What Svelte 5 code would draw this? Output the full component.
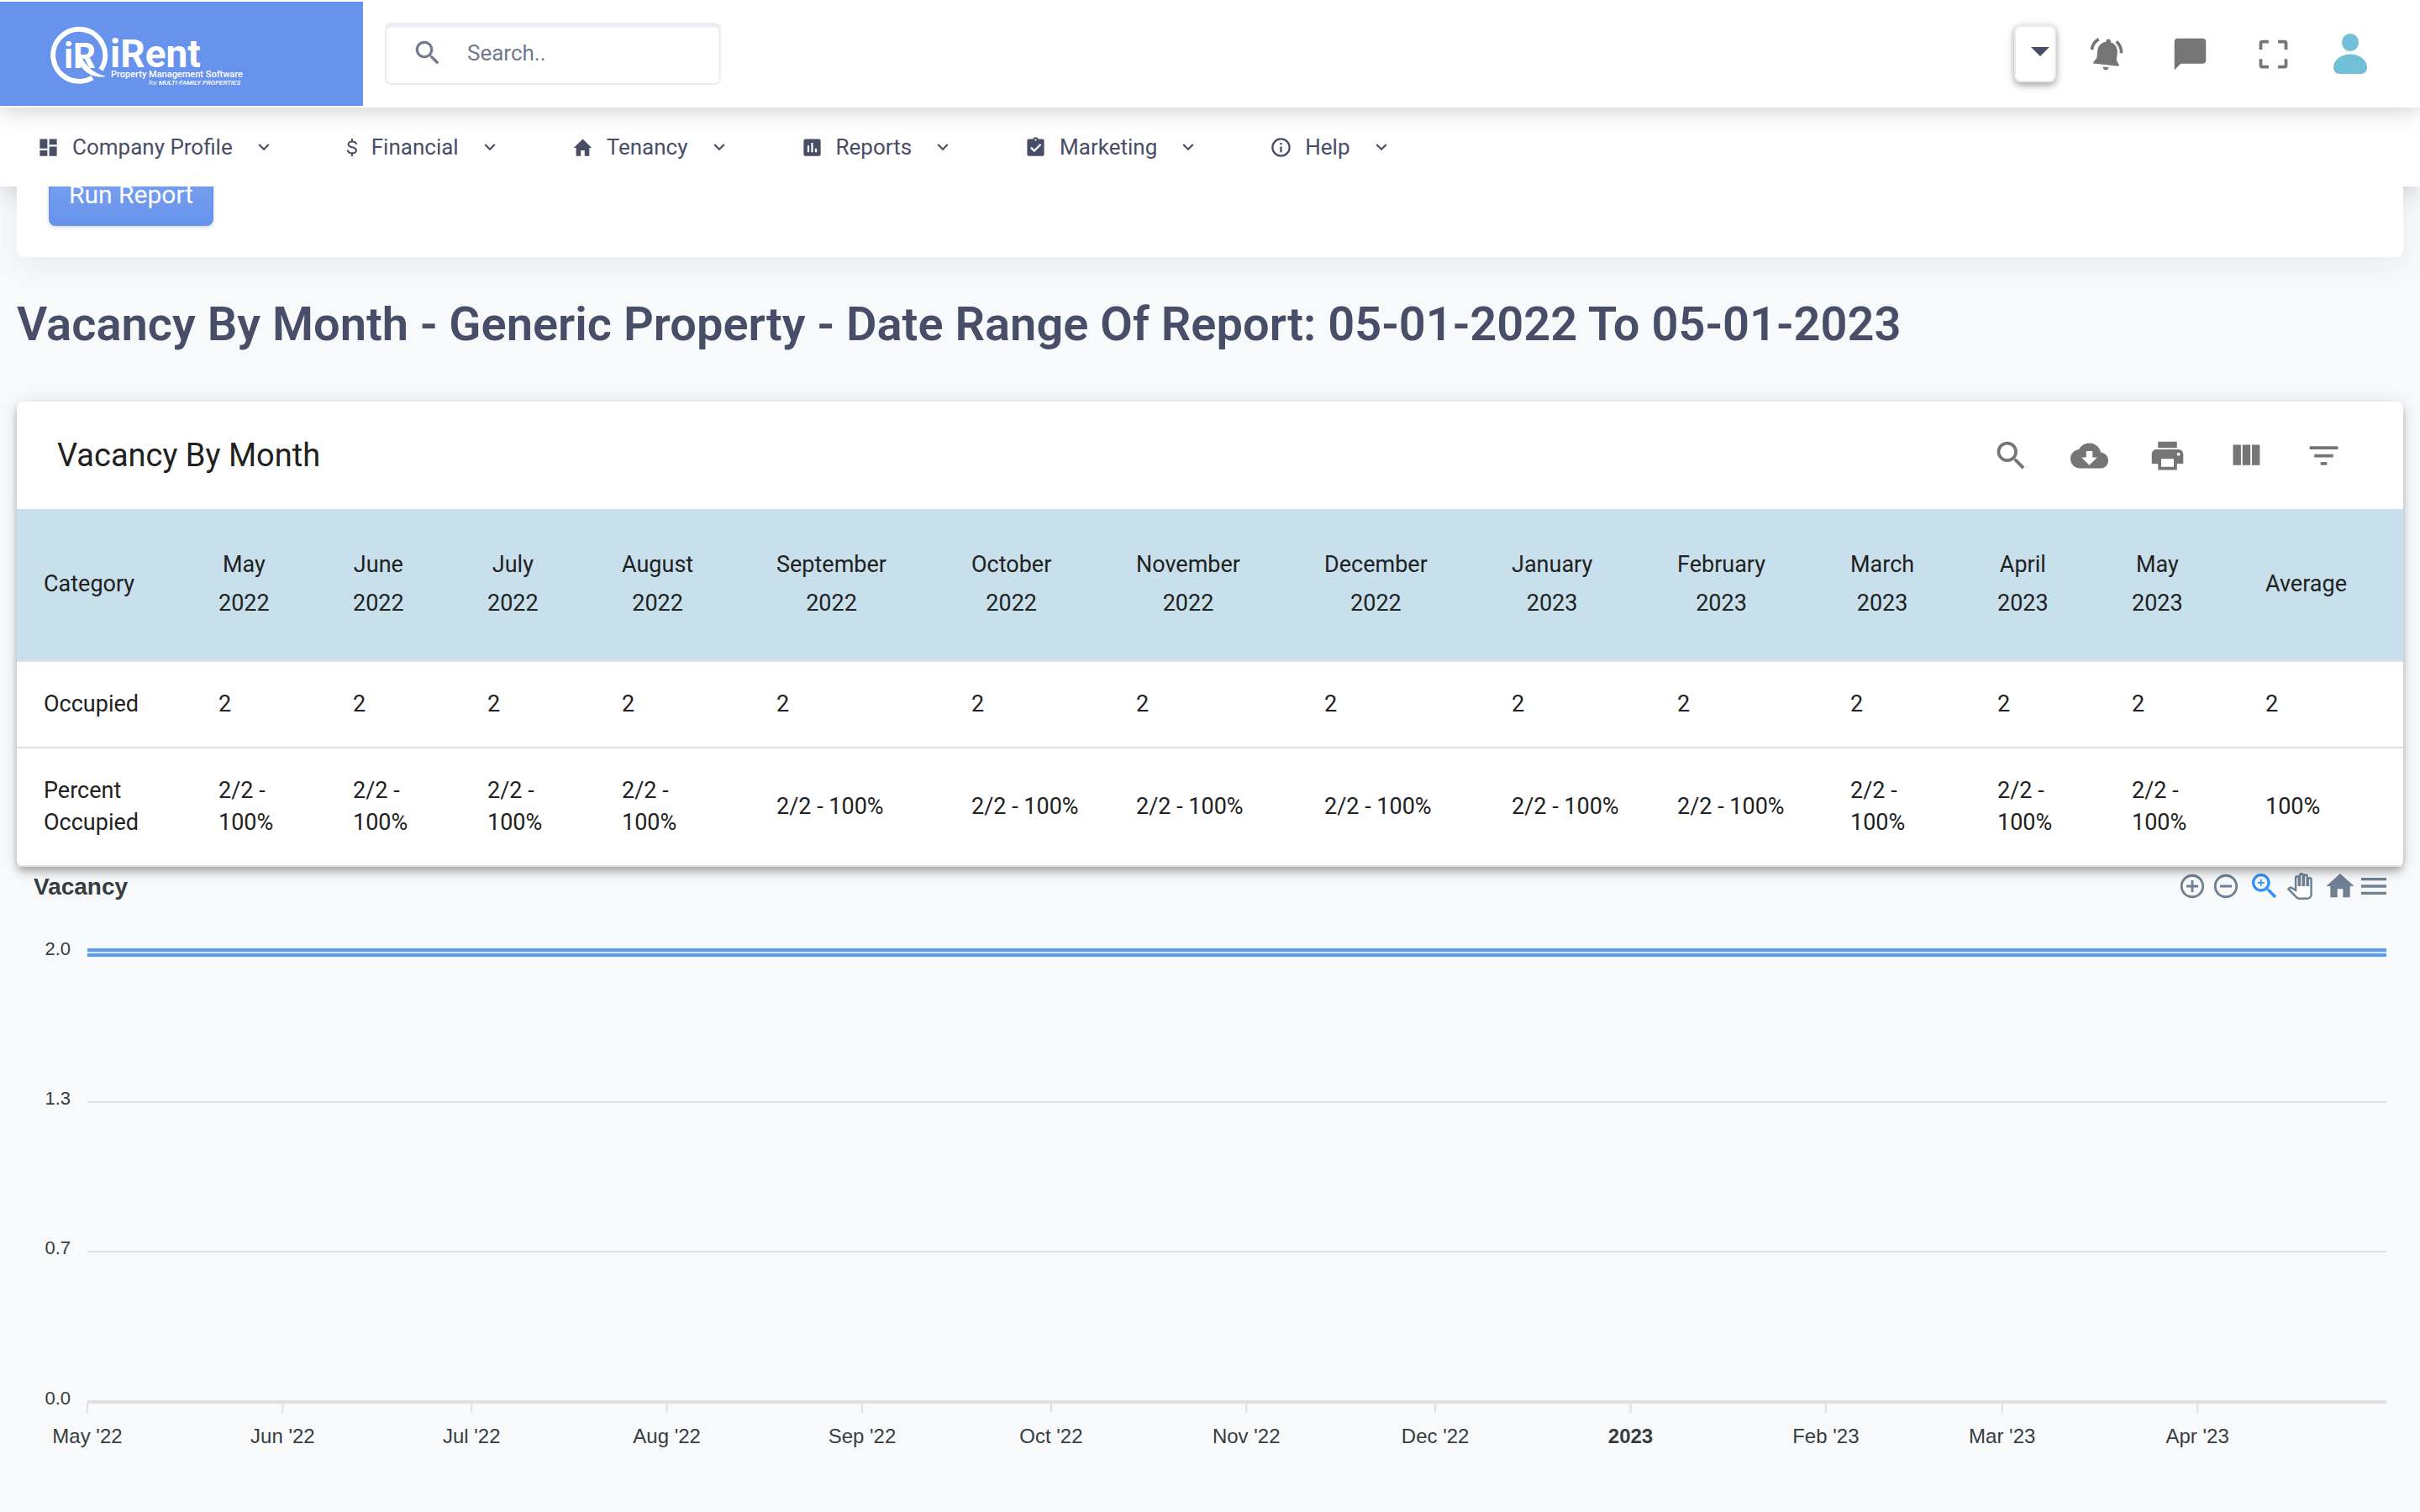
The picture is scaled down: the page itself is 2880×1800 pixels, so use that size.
<script>
  const menu = [
    { label: 'Company Profile', icon: 'dashboard' },
    { label: 'Financial', icon: 'dollar' },
    { label: 'Tenancy', icon: 'home' },
    { label: 'Reports', icon: 'report' },
    { label: 'Marketing', icon: 'task' },
    { label: 'Help', icon: 'info' }
  ];

  const columns = [
    { name: ['Category'], width: 208 },
    { name: ['May', '2022'], width: 160 },
    { name: ['June', '2022'], width: 160 },
    { name: ['July', '2022'], width: 160 },
    { name: ['August', '2022'], width: 184 },
    { name: ['September', '2022'], width: 232 },
    { name: ['October', '2022'], width: 196 },
    { name: ['November', '2022'], width: 224 },
    { name: ['December', '2022'], width: 223 },
    { name: ['January', '2023'], width: 197 },
    { name: ['February', '2023'], width: 206 },
    { name: ['March', '2023'], width: 175 },
    { name: ['April', '2023'], width: 160 },
    { name: ['May', '2023'], width: 159 },
    { name: ['Average'], width: 196 }
  ];
  const totalWidth = columns.reduce((sum, c) => sum + c.width, 0);

  const rows = [
    ['Occupied', ...Array(14).fill('2')],
    ['Percent Occupied', ...Array(13).fill('2/2 - 100%'), '100%']
  ];

  const tools = [
    { label: 'Search', d: 'M15.5 14h-.79l-.28-.27C15.41 12.59 16 11.11 16 9.5 16 5.91 13.09 3 9.5 3S3 5.91 3 9.5 5.91 16 9.5 16c1.61 0 3.09-.59 4.23-1.57l.27.28v.79l5 4.99L20.49 19l-4.99-5zm-6 0C7.01 14 5 11.99 5 9.5S7.01 5 9.5 5 14 7.01 14 9.5 11.99 14 9.5 14z' },
    { label: 'Download CSV', d: 'M19.35 10.04C18.67 6.59 15.64 4 12 4 9.11 4 6.6 5.64 5.35 8.04 2.34 8.36 0 10.91 0 14c0 3.31 2.69 6 6 6h13c2.76 0 5-2.24 5-5 0-2.64-2.05-4.78-4.65-4.96zM17 13l-5 5-5-5h3V9h4v4h3z' },
    { label: 'Print', d: 'M19 8H5c-1.66 0-3 1.34-3 3v6h4v4h12v-4h4v-6c0-1.66-1.34-3-3-3zm-3 11H8v-5h8v5zm3-7c-.55 0-1-.45-1-1s.45-1 1-1 1 .45 1 1-.45 1-1 1zm-1-9H6v4h12V3z' },
    { label: 'View Columns', d: 'M10 18h5V5h-5v13zm-6 0h5V5H4v13zM16 5v13h5V5h-5z' },
    { label: 'Filter Table', d: 'M10 18h4v-2h-4v2zM3 6v2h18V6H3zm3 7h12v-2H6v2z' }
  ];

  const yTicks = [
    { label: '2.0', y: 30 },
    { label: '1.3', y: 208 },
    { label: '0.7', y: 386 },
    { label: '0.0', y: 565 }
  ];

  const months = [
    ["May '22", 31], ["Jun '22", 30], ["Jul '22", 31], ["Aug '22", 31],
    ["Sep '22", 30], ["Oct '22", 31], ["Nov '22", 30], ["Dec '22", 31],
    ['2023', 31], ["Feb '23", 28], ["Mar '23", 31], ["Apr '23", 30]
  ];
  let day = 0;
  const xTicks = months.map(([label, days]) => {
    const x = (day / 365) * 100;
    day += days;
    return { label, x };
  });
</script>

<header class="topbar">
  <a class="brand" href="#home" aria-label="iRent home">
    <svg class="logo" viewBox="0 0 232 80" aria-hidden="true">
      <path d="M60 59A31 31 0 1 0 50 68.500" fill="none" stroke="#fff" stroke-width="6" />
      <text class="mono" x="16" y="57">iR</text>
      <path d="M36 42C42 55 51 63 66 67C49 70 36 60 31 44Z" fill="#fff" />
      <text class="name" x="71" y="56">iRent</text>
      <text class="tag" x="72" y="68">Property Management Software</text>
      <text class="sub" x="117" y="77">for <tspan class="strong">MULTI-FAMILY PROPERTIES</tspan></text>
    </svg>
  </a>

  <label class="search">
    <svg viewBox="0 0 24 24" aria-hidden="true"><path d={tools[0].d} /></svg>
    <input type="text" placeholder="Search.." aria-label="Search" />
  </label>

  <div class="actions">
    <button class="picker" type="button" aria-label="Select property">
      <svg viewBox="0 0 22 11" aria-hidden="true"><path d="M0 0H22L11 11Z" /></svg>
    </button>
    <button class="act" type="button" aria-label="Notifications">
      <svg viewBox="0 0 24 24" aria-hidden="true">
        <g transform="rotate(6 12 12)">
          <path d="M12 2.300c-.900 0-1.500.700-1.500 1.500v.400C7.600 4.900 5.800 7.300 5.800 10.200v5L3.900 18v.800h16.400V18l-1.900-2.800v-5c0-2.900-1.900-5.300-4.900-6v-.400c0-.800-.600-1.500-1.500-1.500z" />
          <path d="M10.300 20.200h3.600a1.800 1.800 0 0 1-3.600 0z" />
        </g>
        <path d="M2.400 9.200C2.700 6.300 4.200 3.900 6.800 2.500M18 3.900C20 5.700 21.200 8.300 21.100 11.300" fill="none" stroke="#757575" stroke-width="1.900" />
      </svg>
    </button>
    <button class="act" type="button" aria-label="Messages">
      <svg viewBox="0 0 24 24" aria-hidden="true"><path d="M20 2H4c-1.100 0-2 .900-2 2v18l4-4h14c1.100 0 2-.900 2-2V4c0-1.100-.900-2-2-2z" /></svg>
    </button>
    <button class="act" type="button" aria-label="Full screen">
      <svg viewBox="0 0 24 24" aria-hidden="true"><path d="M9 4H5a1 1 0 0 0-1 1v4M15 4h4a1 1 0 0 1 1 1v4M9 20H5a1 1 0 0 1-1-1v-4M15 20h4a1 1 0 0 0 1-1v-4" fill="none" stroke="#757575" stroke-width="2" /></svg>
    </button>
    <button class="user" type="button" aria-label="Account">
      <svg viewBox="0 0 40 48" aria-hidden="true">
        <ellipse cx="20" cy="10.500" rx="10" ry="10.500" />
        <path d="M20 24.500C9 24.500 0 32 0 40c0 4.500 3 8 7 8h26c4 0 7-3.500 7-8 0-8-9-15.500-20-15.500z" />
      </svg>
    </button>
  </div>
</header>

<nav class="menu">
  {#each menu as item}
    <a href="#{item.icon}">
      {#if item.icon === 'dollar'}
        <svg class="narrow" viewBox="0 0 16 27" aria-hidden="true"><path d="M8 3v4M8 20v4M13 10C12.500 5.500 3.500 5.500 3.500 9.800C3.500 14.500 13 12 13 17C13 21.500 3 21.500 2.800 16.500" fill="none" stroke="#484d68" stroke-width="2" /></svg>
      {:else}
        <svg class="icon" viewBox="0 0 24 24" aria-hidden="true">
          {#if item.icon === 'dashboard'}
            <path d="M3 3h8v10H3zM3 15h8v6H3zM13 11h8v10h-8zM13 3h8v6h-8z" />
          {:else if item.icon === 'home'}
            <path d="M12 3L2.500 12.500H5V21h5v-6h4v6h5v-8.500h2.500z" />
          {:else if item.icon === 'report'}
            <path fill-rule="evenodd" d="M5 3a2 2 0 0 0-2 2v14a2 2 0 0 0 2 2h14a2 2 0 0 0 2-2V5a2 2 0 0 0-2-2zM7 10h2v7H7zM11 7h2v10h-2zM15 13h2v4h-2z" />
          {:else if item.icon === 'task'}
            <path fill-rule="evenodd" d="M19 3h-4.200a3 3 0 0 0-5.600 0H5a2 2 0 0 0-2 2v14a2 2 0 0 0 2 2h14a2 2 0 0 0 2-2V5a2 2 0 0 0-2-2zM12 3a1 1 0 1 1 0 2 1 1 0 0 1 0-2zM10.500 17L6.300 12.800l1.400-1.400 2.800 2.800L16.700 8l1.400 1.400z" />
          {:else}
            <path d="M12 2a10 10 0 1 0 0 20 10 10 0 0 0 0-20zm0 18a8 8 0 1 1 0-16 8 8 0 0 1 0 16zM11 11h2v6h-2zM11 7h2v2h-2z" />
          {/if}
        </svg>
      {/if}
      <span>{item.label}</span>
      <svg class="chevron" viewBox="0 0 24 24" aria-hidden="true"><path d="M7.400 8.600L12 13.200l4.600-4.600L18 10l-6 6-6-6z" /></svg>
    </a>
  {/each}
</nav>

<main>
  <section class="form-card">
    <button class="run" type="button">Run Report</button>
  </section>

  <h1>Vacancy By Month - Generic Property - Date Range Of Report: 05-01-2022 To 05-01-2023</h1>

  <section class="table-card">
    <div class="table-head">
      <h2>Vacancy By Month</h2>
      <div class="tools">
        {#each tools as tool}
          <button type="button" aria-label={tool.label}>
            <svg viewBox="0 0 24 24" aria-hidden="true"><path d={tool.d} /></svg>
          </button>
        {/each}
      </div>
    </div>
    <table>
      <colgroup>
        {#each columns as column}
          <col style="width: {(column.width / totalWidth) * 100}%" />
        {/each}
      </colgroup>
      <thead>
        <tr>
          {#each columns as column}
            <th scope="col">
              <button type="button">
                {#each column.name as line}<span>{line}</span>{/each}
              </button>
            </th>
          {/each}
        </tr>
      </thead>
      <tbody>
        {#each rows as row}
          <tr>{#each row as cell}<td>{cell}</td>{/each}</tr>
        {/each}
      </tbody>
    </table>
  </section>

  <section class="chart">
    <div class="chart-head">
      <h3>Vacancy</h3>
      <div class="chart-tools">
        <button type="button" aria-label="Zoom in"><svg class="small" viewBox="0 0 24 24"><path d="M13 7h-2v4H7v2h4v4h2v-4h4v-2h-4V7zm-1-5C6.480 2 2 6.480 2 12s4.480 10 10 10 10-4.480 10-10S17.520 2 12 2zm0 18c-4.410 0-8-3.590-8-8s3.590-8 8-8 8 3.590 8 8-3.590 8-8 8z" /></svg></button>
        <button type="button" aria-label="Zoom out"><svg class="small" viewBox="0 0 24 24"><path d="M7 11v2h10v-2H7zm5-9C6.480 2 2 6.480 2 12s4.480 10 10 10 10-4.480 10-10S17.520 2 12 2zm0 18c-4.410 0-8-3.590-8-8s3.590-8 8-8 8 3.590 8 8-3.590 8-8 8z" /></svg></button>
        <button class="selected" type="button" aria-label="Selection zoom"><svg class="large" viewBox="0 0 24 24"><path d={tools[0].d} /><path d="M12 10h-2v2H9v-2H7V9h2V7h1v2h2v1z" /></svg></button>
        <button class="pan" type="button" aria-label="Panning"><svg viewBox="-1 -1 26 26"><path d="M23 5.500V20c0 2.200-1.800 4-4 4h-7.300c-1.080 0-2.100-.430-2.850-1.190L1 14.830s1.260-1.230 1.300-1.250c.220-.190.490-.290.790-.290.220 0 .420.060.600.160.040.010 4.310 2.460 4.310 2.460V4c0-.830.670-1.500 1.500-1.500S11 3.170 11 4v7h1V1.500c0-.830.670-1.500 1.500-1.500S15 .670 15 1.500V11h1V2.500c0-.830.670-1.500 1.500-1.500s1.500.670 1.500 1.500V11h1V5.500c0-.830.670-1.500 1.500-1.500s1.500.670 1.500 1.500z" /></svg></button>
        <button class="reset" type="button" aria-label="Reset zoom"><svg class="large" viewBox="0 0 24 24"><path d="M10 20v-6h4v6h5v-8h3L12 3 2 12h3v8z" /></svg></button>
        <button type="button" aria-label="Menu"><svg class="large" viewBox="0 0 24 24"><path d="M3 18h18v-2H3v2zm0-5h18v-2H3v2zm0-7v2h18V6H3z" /></svg></button>
      </div>
    </div>
    <div class="plot">
      <svg class="y-axis" aria-hidden="true">
        {#each yTicks as tick}
          <text x="44" y={tick.y + 3} text-anchor="end">{tick.label}</text>
        {/each}
      </svg>
      <svg class="area" role="img" aria-label="Vacancy by month, constant at 2.0">
        <rect x="0" y="25" width="100%" height="10" fill="#589ef5" />
        {#each yTicks as tick}
          <line x1="0" x2="100%" y1={tick.y} y2={tick.y} stroke="#e0e0e0" stroke-width={tick.label === '0.0' ? 4 : 2} />
        {/each}
        {#each xTicks as tick}
          <line x1="{tick.x}%" x2="{tick.x}%" y1="566" y2="578" stroke="#e0e0e0" stroke-width="2" />
          <text class:bold={tick.label === '2023'} x="{tick.x}%" y="614" text-anchor="middle">{tick.label}</text>
        {/each}
      </svg>
    </div>
  </section>
</main>

<style>
  :global(body) {
    background: #f8f9fb;
    color: #484d68;
    font-family: Roboto, "Liberation Sans", sans-serif;
    font-size: 26px;
  }
  button {
    border: 0;
    padding: 0;
    background: none;
    color: inherit;
    font: inherit;
    cursor: pointer;
  }
  svg { display: block; flex: none; }

  .topbar {
    position: relative;
    z-index: 3;
    display: flex;
    align-items: center;
    height: 128px;
    background: #fff;
    box-shadow: 0 4px 24px rgba(0, 0, 0, 0.18);
  }
  .brand {
    display: flex;
    align-items: center;
    width: 15%;
    height: 124px;
    box-sizing: border-box;
    padding-left: 60px;
    background: #6793ec;
  }
  .logo { width: 232px; height: 80px; fill: #fff; }
  .mono { font-size: 42px; font-weight: 700; }
  .name { font-size: 46px; font-weight: 700; }
  .tag { font-size: 11px; font-weight: 500; }
  .sub { font-size: 8px; font-style: italic; }
  .strong { font-weight: 500; }

  .search {
    display: flex;
    align-items: center;
    gap: 28px;
    box-sizing: border-box;
    width: 400px;
    height: 74px;
    margin-left: 26px;
    padding: 0 30px 2px;
    border: 2px solid #ebebf2;
    border-radius: 8px;
    box-shadow: inset 0 3px 2px #ebebf2;
  }
  .search svg { width: 38px; height: 38px; fill: #74788d; }
  .search input {
    min-width: 0;
    flex: 1;
    border: 0;
    padding: 0;
    outline: 0;
    background: none;
    color: #74788d;
    font: inherit;
  }
  .search input::placeholder { color: #74788d; opacity: 1; }

  .actions {
    display: flex;
    align-items: center;
    gap: 54px;
    margin-left: auto;
    padding-right: 63px;
  }
  .picker {
    display: flex;
    align-items: center;
    justify-content: flex-end;
    box-sizing: border-box;
    width: 50px;
    height: 68px;
    margin-right: -16px;
    padding: 0 6px 6px 0;
    border: 2px solid #ebebf2;
    border-radius: 8px;
    background: #fff;
    box-shadow: 0 4px 8px rgba(0, 0, 0, 0.3), 0 0 8px rgba(0, 0, 0, 0.1);
  }
  .picker svg { width: 22px; height: 11px; fill: #484d68; }
  .act svg { width: 45px; height: 45px; fill: #757575; }
  .user { margin-left: -5px; }
  .user svg { width: 40px; height: 48px; fill: #72bfd8; }

  .menu {
    position: relative;
    z-index: 2;
    display: flex;
    align-items: center;
    gap: 84px;
    height: 94px;
    padding-left: 44px;
    background: #fff;
    box-shadow: 0 8px 32px rgba(0, 0, 0, 0.14);
  }
  .menu a {
    display: flex;
    align-items: center;
    color: inherit;
    text-decoration: none;
  }
  .menu svg { fill: #484d68; }
  .menu .icon { width: 27px; height: 27px; }
  .menu .narrow { width: 16px; height: 27px; }
  .menu span { margin: 0 24px 0 15px; }
  .menu .chevron { width: 26px; height: 26px; }

  main { padding: 0 20px; }
  .form-card {
    position: relative;
    z-index: 2;
    margin-top: -42px;
    padding: 15px 38px 37px;
    border-radius: 8px;
    background: #fff;
    box-shadow: 0 12px 32px rgba(18, 38, 63, 0.06);
    clip-path: inset(42px -40px -60px -40px);
  }
  .run {
    display: block;
    height: 74px;
    padding: 0 22px;
    border: 2px solid #6793ec;
    border-radius: 8px;
    background: linear-gradient(#7ea3f0, #6793ec);
    box-shadow: 0 2px 4px rgba(0, 0, 0, 0.15);
    color: #fff;
    font-size: 30px;
    line-height: 42px;
  }
  h1 {
    margin: 46px 0 58px;
    font-size: 56px;
    font-weight: 600;
    line-height: 68px;
  }

  .table-card {
    position: relative;
    border-radius: 8px;
    background: #fff;
    color: #212121;
    box-shadow: 0 4px 8px -2px rgba(0, 0, 0, 0.2), 0 8px 10px rgba(0, 0, 0, 0.14), 0 2px 20px rgba(0, 0, 0, 0.12);
  }
  .table-head {
    display: flex;
    align-items: center;
    justify-content: space-between;
    height: 128px;
    padding: 0 48px;
  }
  h2 { margin: 0; font-size: 38px; font-weight: 400; }
  .tools { display: flex; }
  .tools button { padding: 24px; }
  .tools svg { width: 45px; height: 45px; fill: #757575; }

  table {
    width: 100%;
    table-layout: fixed;
    border-collapse: separate;
    border-spacing: 0;
    font-size: 27px;
  }
  th {
    height: 177px;
    padding: 0 32px 3px;
    border-bottom: 2px solid #e0e0e0;
    background: #c8e0eb;
    font-weight: 400;
    text-align: left;
  }
  th span { display: block; line-height: 46px; }
  td {
    padding: 31px 32px 32px;
    border-bottom: 2px solid #e0e0e0;
    line-height: 38px;
  }

  .chart {
    padding: 0 20px;
    color: #373d3f;
    font-family: "Liberation Sans", Arial, sans-serif;
  }
  .chart-head {
    display: flex;
    align-items: center;
    justify-content: space-between;
    height: 46px;
  }
  h3 { margin: 0; padding-top: 2px; font-size: 28px; }
  .chart-tools {
    display: flex;
    align-items: center;
    gap: 6px;
    margin-right: -5px;
  }
  .chart-tools svg { fill: #6e8192; }
  .chart-tools .small { width: 34px; height: 34px; }
  .chart-tools .large { width: 40px; height: 40px; }
  .chart-tools .selected { margin-left: 3px; }
  .chart-tools .selected svg { fill: #3390f8; }
  .chart-tools .pan svg { width: 32px; height: 32px; fill: #fff; stroke: #6e8192; stroke-width: 2; }
  .chart-tools .reset { margin: 0 -6px 0 6px; }

  .plot { display: flex; padding-top: 26px; }
  .plot svg { height: 640px; overflow: visible; }
  .y-axis { width: 64px; font-size: 22px; }
  .area { flex: 1; min-width: 0; font-size: 24px; }
  .plot text { fill: #373d3f; }
  .plot .bold { font-weight: 700; }
</style>
